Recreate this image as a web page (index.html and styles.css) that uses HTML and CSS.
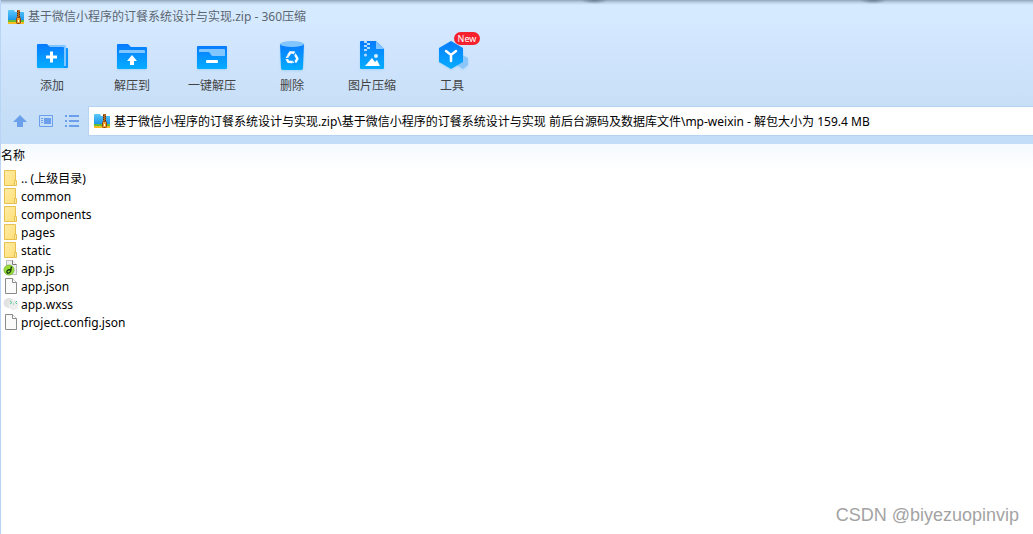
FILE: index.html
```html
<!DOCTYPE html>
<html lang="zh-CN">
<head>
<meta charset="utf-8">
<title>360压缩</title>
<link rel="stylesheet" href="styles.css">
</head>
<body>
<svg class="defs" aria-hidden="true">
  <defs>
    <linearGradient id="blue" x1="0" y1="0" x2="0" y2="1"><stop offset="0" stop-color="#087bff"/><stop offset="1" stop-color="#05adff"/></linearGradient>
    <linearGradient id="gold" x1="0" y1="0" x2="1" y2="1"><stop offset="0" stop-color="#ffeba5"/><stop offset="1" stop-color="#ffdf78"/></linearGradient>
    <linearGradient id="sky" x1="0" y1="0" x2="0" y2="1"><stop offset="0" stop-color="#5cc8fa"/><stop offset="1" stop-color="#1592e8"/></linearGradient>
    <symbol id="archive" viewBox="0 0 16 16">
      <path d="M0 2q0-1 1-1h5l1 2h9v9H0z" fill="url(#sky)"/>
      <path d="M0 11h16v2H0z" fill="#65bd35"/>
      <path d="M0 13h16v2H0z" fill="#f9bd22"/>
      <path d="M9 1h3v10H9z" fill="#b86a20"/>
      <path d="M9 2h1v1H9zm2 1h1v1h-1zM9 4h1v1H9zm2 1h1v1h-1zM9 6h1v1H9zm2 1h1v1h-1z" fill="#4b2c16"/>
      <rect x="8.5" y="8.500" width="4" height="6" rx="1" fill="#f1a52c" stroke="#874713"/>
      <path d="M10 11h1v2h-1z" fill="#fff"/>
    </symbol>
    <symbol id="folder" viewBox="0 0 14 16">
      <path d="M1.500.5h11v15h-11z" fill="url(#gold)" stroke="#e8c050"/>
      <path d="M11.500 10.500h2v5h-2z" fill="#ffe9a0" stroke="#e8c050"/>
    </symbol>
    <symbol id="page" viewBox="0 0 14 16">
      <path d="M2.500.5h7l4 4v11h-11z" fill="#fafafa" stroke="#8b8b8b"/>
      <path d="M9.500.5v4h4" fill="#fff" stroke="#8b8b8b"/>
    </symbol>
  </defs>
</svg>
<div class="window">
  <header class="chrome">
    <div class="titlebar">
      <svg class="zip"><use href="#archive"/></svg>
      <h1 class="title">基于微信小程序的订餐系统设计与实现.zip - 360压缩</h1>
    </div>
    <nav class="toolbar">
      <button class="tool" type="button">
        <svg class="tool-icon" viewBox="0 0 36 36">
          <path d="M16 9h15v1h2q1 0 1 1v18q0 1-1 1H16z" fill="#0996ff"/>
          <path d="M15 7h15q2 0 2 2v19h-2V10H15z" fill="#82c6ff"/>
          <path d="M3 7q0-1 1-1h9l3 3h13q1 0 1 1v20H4q-1 0-1-1z" fill="url(#blue)"/>
          <path d="M12 19h11M17.500 13.500v11" stroke="#fff" stroke-width="3" fill="none"/>
        </svg>
        <span>添加</span>
      </button>
      <button class="tool" type="button">
        <svg class="tool-icon" viewBox="0 0 36 36">
          <path d="M3 7q0-1 1-1h10l3 3h15q1 0 1 1v20q0 1-1 1H4q-1 0-1-1z" fill="url(#blue)"/>
          <path d="M5 15v-2q0-1 1-1h24q1 0 1 1v2z" fill="#82c6ff"/>
          <path d="M18 17l5 6h-3v4h-4v-4h-3z" fill="#fff"/>
        </svg>
        <span>解压到</span>
      </button>
      <button class="tool" type="button">
        <svg class="tool-icon" viewBox="0 0 36 36">
          <rect x="3" y="8" width="30" height="23" rx="1" fill="url(#blue)"/>
          <path d="M5 12q0-1 1-1h24q1 0 1 1v6H18l-3-4H5z" fill="#82c6ff"/>
          <rect x="12" y="22" width="12" height="3" rx="1" fill="#fff"/>
        </svg>
        <span>一键解压</span>
      </button>
      <button class="tool" type="button">
        <svg class="tool-icon" viewBox="0 0 36 36">
          <path d="M6 6h24l-1 24q0 2-2 2H9q-2 0-2-2z" fill="url(#blue)"/>
          <ellipse cx="18" cy="6" rx="12" ry="3" fill="#82c6ff"/>
          <g fill="none" stroke="#fff" stroke-width="2.400">
            <path d="M14 18l2.200-3.500h3.600l1.500 2.600"/>
            <path d="M14 18l2.200-3.500h3.600l1.500 2.600" transform="rotate(120 18 19.700)"/>
            <path d="M14 18l2.200-3.500h3.600l1.500 2.600" transform="rotate(240 18 19.700)"/>
          </g>
          <path d="M18 19.700L22.500 13M18 19.700L10 21M18 19.700L22 27" stroke="#0793ff" stroke-width="1.200"/>
        </svg>
        <span>删除</span>
      </button>
      <button class="tool" type="button">
        <svg class="tool-icon" viewBox="0 0 36 36">
          <path d="M6 4q0-1 1-1h15l8 8v19q0 1-1 1H7q-1 0-1-1z" fill="url(#blue)"/>
          <path d="M22 3l8 8h-8z" fill="#82c6ff"/>
          <path d="M10 3h3v2h-3zm3 2h3v2h-3zm-3 2h3v2h-3zm3 2h3v2h-3zm-3 2h3v2h-3z" fill="#b3dcff"/>
          <circle cx="11.500" cy="17" r="1.500" fill="#b3dcff"/><circle cx="22" cy="18" r="2" fill="#d9efff"/>
          <path d="M11 28l7-8 3 4 2-2 3 6z" fill="#fff"/>
        </svg>
        <span>图片压缩</span>
      </button>
      <button class="tool" type="button">
        <svg class="tool-icon" viewBox="0 0 36 36">
          <path d="M27 16l7 4v7l-5 4-6-4z" fill="#8bc6fb"/>
          <path d="M17 3l12 7v14l-12 7-12-7V10z" fill="url(#blue)"/>
          <path d="M12 13l5 4 5-4M17 17v6" fill="none" stroke="#fff" stroke-width="2.500" stroke-linecap="round"/>
        </svg>
        <span>工具</span>
        <span class="badge">New</span>
      </button>
    </nav>
    <div class="addressbar">
      <div class="nav-buttons">
        <button class="nav" type="button" aria-label="向上"><svg viewBox="0 0 14 14"><path d="M7 1l7 7h-4v5H4V8H0z" fill="#6b9fec"/></svg></button>
        <button class="nav" type="button" aria-label="预览"><svg viewBox="0 0 14 14"><path d="M.5 1.500h13v11H.5z" fill="none" stroke="#6b9fec"/><path d="M5 4h7v6H5zM2 4h2v1H2zm0 2h2v1H2zm0 2h2v1H2z" fill="#6b9fec"/></svg></button>
        <button class="nav" type="button" aria-label="列表"><svg viewBox="0 0 14 14"><path d="M0 2h2M4 2h10M0 7h2M4 7h10M0 12h2M4 12h10" stroke="#6b9fec" stroke-width="2"/></svg></button>
      </div>
      <label class="path">
        <svg class="zip"><use href="#archive"/></svg>
        <input class="path-input" type="text" aria-label="路径" value="基于微信小程序的订餐系统设计与实现.zip\基于微信小程序的订餐系统设计与实现 前后台源码及数据库文件\mp-weixin - 解包大小为 159.4 MB">
      </label>
    </div>
  </header>
  <main class="content">
    <table class="files">
      <thead><tr><th scope="col">名称</th></tr></thead>
      <tbody>
        <tr><td><div class="file"><svg><use href="#folder"/></svg><span>.. (上级目录)</span></div></td></tr>
        <tr><td><div class="file"><svg><use href="#folder"/></svg><span>common</span></div></td></tr>
        <tr><td><div class="file"><svg><use href="#folder"/></svg><span>components</span></div></td></tr>
        <tr><td><div class="file"><svg><use href="#folder"/></svg><span>pages</span></div></td></tr>
        <tr><td><div class="file"><svg><use href="#folder"/></svg><span>static</span></div></td></tr>
        <tr><td><div class="file"><svg viewBox="0 0 14 16"><path d="M3.500.5h6l4 4v10h-10z" fill="#eee" stroke="#bbb"/><path d="M9.500.5v4h4" fill="#fff" stroke="#777"/><circle cx="6" cy="10" r="5" fill="#9bdc35" stroke="#7dbd45"/><path d="M8.500 6.500l-1 5q-1 2-3 1.500-1.500-1.500.5-3 1.500-.5 2.500 0" fill="none" stroke="#173c12" stroke-width="1.400"/></svg><span>app.js</span></div></td></tr>
        <tr><td><div class="file"><svg><use href="#page"/></svg><span>app.json</span></div></td></tr>
        <tr><td><div class="file"><svg viewBox="0 0 14 16"><ellipse cx="6" cy="7" rx="5.500" ry="5" fill="#e2e2e2"/><ellipse cx="10.500" cy="9" rx="5" ry="5" fill="#ededed"/><path d="M7 5l2 1.500L7 8M10 8h1M14 5l-1.500 1.500L14 8" fill="none" stroke="#55c995"/></svg><span>app.wxss</span></div></td></tr>
        <tr><td><div class="file"><svg><use href="#page"/></svg><span>project.config.json</span></div></td></tr>
      </tbody>
    </table>
  </main>
  <footer class="watermark">CSDN @biyezuopinvip</footer>
</div>
</body>
</html>
```
FILE: styles.css
```css
* { box-sizing: border-box; }
body {
  margin: 0;
  background: #fff;
  color: #000;
  font: 12px/18px "Noto Sans", "Noto Sans CJK SC", sans-serif;
}
button, input { font: inherit; color: inherit; border: 0; padding: 0; background: none; }
svg { display: block; flex: none; overflow: visible; }
.defs { position: absolute; width: 0; height: 0; }
.window {
  display: flex;
  flex-direction: column;
  min-height: 100vh;
  border-left: 1px solid #b9d5f5;
}
.chrome {
  background:
    radial-gradient(ellipse 14px 4px at 57.5% 0, #55687bb0, #55687b00),
    radial-gradient(ellipse 14px 4px at 84.5% 0, #55687bb0, #55687b00),
    linear-gradient(#8fa4b8 0, #b5cbdf 2px, #d5eaff 5px, #d5eaff 20px, #cfe4fc 60px, #c7dff7 105px, #c3ddf8 100%);
  padding-bottom: 8px;
}
.titlebar { display: flex; align-items: center; gap: 4px; height: 32px; padding: 1px 7px 0; }
.zip { width: 16px; height: 16px; }
.title { margin: 0; font-size: 12px; font-weight: 400; color: #5c6570; white-space: nowrap; }
.toolbar { display: flex; height: 74px; padding: 6px 11px 0; }
.tool {
  position: relative;
  display: flex;
  flex-direction: column;
  align-items: center;
  gap: 3px;
  width: 80px;
  height: 58px;
  color: #444;
}
.tool-icon { width: 36px; height: 36px; filter: drop-shadow(0 1px 1px #8fc5f580); }
.badge {
  position: absolute;
  top: -6px;
  left: 42px;
  width: 26px;
  height: 13px;
  border-radius: 7px;
  background: #f5222d;
  color: #fff;
  font-size: 9px;
  line-height: 13px;
}
.addressbar { display: flex; align-items: center; height: 30px; }
.nav-buttons { display: flex; gap: 12px; width: 87px; padding-left: 12px; }
.nav, .nav svg { width: 14px; height: 14px; }
.path {
  display: flex;
  flex: 1;
  align-items: center;
  gap: 4px;
  min-width: 0;
  height: 30px;
  padding-left: 5px;
  border: 1px solid #b6d3f2;
  border-right: 0;
  background: #fff;
}
.path-input { flex: 1; min-width: 0; padding-top: 2px; outline: 0; }
.content { flex: 1; background: linear-gradient(#f3f9ff, #fff 25px); }
.files { width: 100%; border-collapse: collapse; }
.files th { height: 25px; padding: 0 0 2px; font-weight: 400; text-align: left; }
.files td { padding: 0; }
.file { display: flex; align-items: center; gap: 4px; height: 18px; padding-left: 2px; white-space: nowrap; }
.file svg { width: 14px; height: 16px; }
.file span { padding-top: 2px; }
.watermark {
  padding: 0 14px 8px;
  text-align: right;
  color: #a3a3a3;
  font: 18px/22px "Liberation Sans", sans-serif;
}
```
